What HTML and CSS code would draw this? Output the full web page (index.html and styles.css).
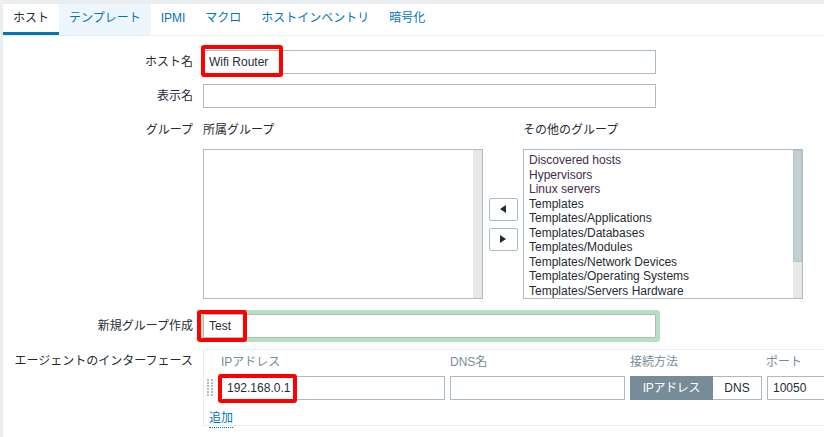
FILE: index.html
```html
<!DOCTYPE html>
<html lang="ja">
<head>
    <meta charset="UTF-8">
    <meta name="viewport" content="width=device-width, initial-scale=1.0">
    <title>ホスト</title>
    <link rel="stylesheet" href="styles.css">
</head>
<body>
    <div class="page">
        <ul class="tabs">
            <li class="tab active">ホスト</li>
            <li class="tab hover">テンプレート</li>
            <li class="tab">IPMI</li>
            <li class="tab">マクロ</li>
            <li class="tab">ホストインベントリ</li>
            <li class="tab">暗号化</li>
        </ul>

        <div class="form">
            <div class="row">
                <div class="lbl">ホスト名</div>
                <div class="field">
                    <div class="wrap">
                        <input class="text wide" type="text" value="Wifi Router">
                        <span class="mark mark-host"></span>
                    </div>
                </div>
            </div>

            <div class="row">
                <div class="lbl">表示名</div>
                <div class="field">
                    <input class="text wide" type="text" value="">
                </div>
            </div>

            <div class="row row-groups">
                <div class="lbl">グループ</div>
                <div class="field groups">
                    <div class="group-col">
                        <div class="group-head">所属グループ</div>
                        <div class="listbox">
                            <div class="items"></div>
                            <div class="scroll"></div>
                        </div>
                    </div>
                    <div class="move">
                        <button class="btn-move"><svg width="6" height="8" viewBox="0 0 6 8"><polygon points="6,0 6,8 0,4" fill="#1f2c33"/></svg></button>
                        <button class="btn-move"><svg width="6" height="8" viewBox="0 0 6 8"><polygon points="0,0 0,8 6,4" fill="#1f2c33"/></svg></button>
                    </div>
                    <div class="group-col">
                        <div class="group-head">その他のグループ</div>
                        <div class="listbox">
                            <div class="items">
                                <div class="item used">Discovered hosts</div>
                                <div class="item used">Hypervisors</div>
                                <div class="item used">Linux servers</div>
                                <div class="item">Templates</div>
                                <div class="item">Templates/Applications</div>
                                <div class="item">Templates/Databases</div>
                                <div class="item">Templates/Modules</div>
                                <div class="item">Templates/Network Devices</div>
                                <div class="item">Templates/Operating Systems</div>
                                <div class="item">Templates/Servers Hardware</div>
                            </div>
                            <div class="scroll"><div class="thumb"></div></div>
                        </div>
                    </div>
                </div>
            </div>

            <div class="row row-new">
                <div class="lbl">新規グループ作成</div>
                <div class="field">
                    <div class="wrap">
                        <input class="text wide focus" type="text" value="Test">
                        <span class="mark mark-test"></span>
                    </div>
                </div>
            </div>

            <div class="row row-iface">
                <div class="lbl">エージェントのインターフェース</div>
                <div class="field iface">
                    <div class="iface-head">
                        <span class="h-ip">IPアドレス</span>
                        <span class="h-dns">DNS名</span>
                        <span class="h-conn">接続方法</span>
                        <span class="h-port">ポート</span>
                    </div>
                    <div class="iface-row">
                        <span class="handle">
                            <svg width="6" height="19" viewBox="0 0 6 19">
                                <g fill="#acbbc2">
                                    <rect x="0" y="0" width="2" height="2"/><rect x="4" y="0" width="2" height="2"/>
                                    <rect x="0" y="3" width="2" height="2"/><rect x="4" y="3" width="2" height="2"/>
                                    <rect x="0" y="6" width="2" height="2"/><rect x="4" y="6" width="2" height="2"/>
                                    <rect x="0" y="9" width="2" height="2"/><rect x="4" y="9" width="2" height="2"/>
                                    <rect x="0" y="12" width="2" height="2"/><rect x="4" y="12" width="2" height="2"/>
                                    <rect x="0" y="15" width="2" height="2"/><rect x="4" y="15" width="2" height="2"/>
                                </g>
                            </svg>
                        </span>
                        <div class="wrap">
                            <input class="text ip" type="text" value="192.168.0.1">
                            <span class="mark mark-ip"></span>
                        </div>
                        <input class="text dns" type="text" value="">
                        <div class="seg">
                            <span class="seg-btn on">IPアドレス</span>
                            <span class="seg-btn">DNS</span>
                        </div>
                        <input class="text port" type="text" value="10050">
                    </div>
                    <div class="add-line"><span class="add">追加</span></div>
                </div>
            </div>
        </div>
    </div>
</body>
</html>
```

FILE: styles.css
```css
* {
    box-sizing: border-box;
}

html, body {
    margin: 0;
    padding: 0;
    height: 437px;
    overflow: hidden;
}

body {
    background: #ebeef0;
    font-family: 'Liberation Sans', 'Noto Sans CJK JP', sans-serif;
    font-size: 12px;
    color: #1f2c33;
}

.page {
    margin: 4px 0 0 3px;
    background: #fff;
    height: 433px;
    overflow: hidden;
}

.tabs {
    display: flex;
    margin: 0;
    padding: 0;
    list-style: none;
    border-bottom: 1px solid #ebeef0;
}

.tab {
    height: 31px;
    line-height: 28px;
    padding: 0 10px;
    color: #0275b8;
    border-bottom: 3px solid transparent;
}

.tab.active {
    color: #1f2c33;
    border-bottom-color: #0275b8;
}

.tab.hover {
    background: #eef6fd;
}

.form {
    padding-top: 14px;
}

.row {
    display: flex;
    margin-bottom: 10px;
}

.lbl {
    width: 190px;
    text-align: right;
    line-height: 24px;
    flex-shrink: 0;
}

.field {
    margin-left: 10px;
}

.wrap {
    position: relative;
    flex-shrink: 0;
}

.text {
    display: block;
    flex-shrink: 0;
    height: 24px;
    padding: 0 5px;
    border: 1px solid #acbbc2;
    border-radius: 0;
    background: #fff;
    font-family: inherit;
    font-size: 12px;
    color: #1f2c33;
    outline: none;
}

.wide {
    width: 453px;
}

.focus {
    box-shadow: 0 0 0 4px #b7e0c2;
    border-radius: 1px;
}

/* red annotation frames */
.mark {
    position: absolute;
    border: 4px solid #f00;
    border-radius: 3px;
}

.mark-host {
    left: -2px;
    top: -5px;
    width: 82px;
    height: 32px;
}

.mark-test {
    left: -6px;
    top: -4px;
    width: 50px;
    height: 32px;
}

.mark-ip {
    left: -3px;
    top: -2px;
    width: 79px;
    height: 29px;
}

/* groups */
.groups {
    display: flex;
}

.group-head {
    line-height: 24px;
    margin-bottom: 7px;
}

.listbox {
    display: flex;
    width: 280px;
    height: 150px;
    border: 1px solid #acbbc2;
}

.items {
    flex: 1;
    padding: 3px 5px;
    line-height: 14.5px;
    overflow: hidden;
    white-space: nowrap;
}

.item.used {
    color: #442a4a;
}

.scroll {
    width: 9px;
    background: #e8e8e8;
}

.thumb {
    height: 112px;
    background: #c3cfd4;
    border: 1px solid #b6c3c9;
}

.move {
    width: 40px;
    display: flex;
    flex-direction: column;
    justify-content: center;
    align-items: center;
    gap: 7px;
    padding-top: 31px;
}

.btn-move {
    width: 29px;
    height: 23px;
    padding: 0;
    border: 1px solid #acbbc2;
    border-radius: 2px;
    background: #fff;
    display: flex;
    align-items: center;
    justify-content: center;
}

.row-groups {
    margin-bottom: 15px;
}

.row-new {
    margin-bottom: 11px;
}

/* interfaces */
.iface {
    flex-shrink: 0;
    width: 720px;
    border: 1px solid #ebeef0;
    border-right: none;
    padding-top: 5px;
}

.iface-head {
    display: flex;
    line-height: 14px;
    color: #768d99;
    margin-bottom: 7px;
    white-space: nowrap;
}

.h-ip {
    margin-left: 17px;
    width: 229px;
}

.h-dns {
    width: 180px;
}

.h-conn {
    width: 136px;
}

.iface-row {
    display: flex;
    gap: 5px;
    align-items: center;
}

.handle {
    flex-shrink: 0;
    width: 12px;
    padding-left: 3px;
    display: flex;
    align-items: center;
}

.ip {
    width: 224px;
}

.dns {
    width: 175px;
}

.seg {
    display: flex;
    flex-shrink: 0;
    height: 24px;
    white-space: nowrap;
}

.seg-btn {
    line-height: 22px;
    border: 1px solid #acbbc2;
    background: #fff;
    text-align: center;
}

.seg-btn.on {
    width: 83px;
    background: #768d99;
    border-color: #768d99;
    color: #fff;
    letter-spacing: -0.3px;
}

.seg-btn + .seg-btn {
    width: 49px;
    border-left: none;
}

.port {
    width: 100px;
}

.add-line {
    margin-top: 11px;
    padding-left: 5px;
    line-height: 14px;
}

.add {
    color: #0275b8;
    border-bottom: 1px dotted #0275b8;
    padding-bottom: 2px;
}
```
